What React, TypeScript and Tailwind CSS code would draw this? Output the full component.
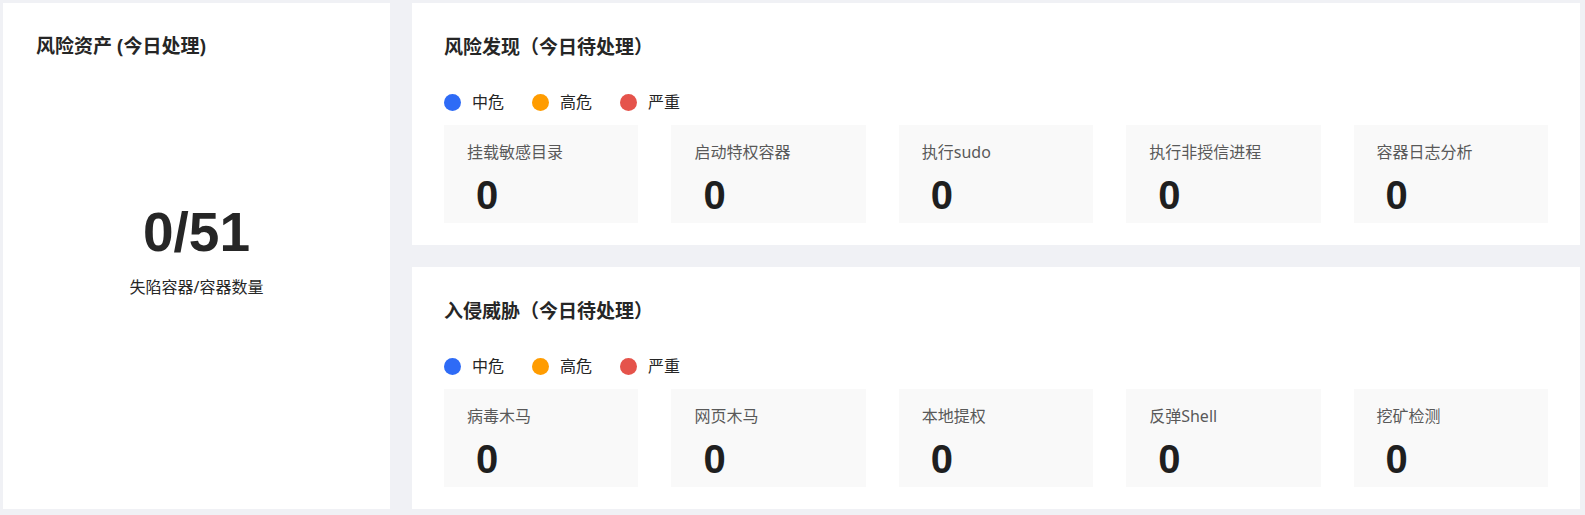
const levels = [
  { name: "中危", color: "bg-[#2e6bf6]" },
  { name: "高危", color: "bg-[#ff9c00]" },
  { name: "严重", color: "bg-[#e5534b]" },
];

const risks = ["挂载敏感目录", "启动特权容器", "执行sudo", "执行非授信进程", "容器日志分析"];
const threats = ["病毒木马", "网页木马", "本地提权", "反弹Shell", "挖矿检测"];

function Legend() {
  return (
    <div className="mt-[32px] flex items-center gap-[28px]">
      {levels.map((l) => (
        <div key={l.name} className="flex items-center gap-[11px]">
          <span className={`h-[17px] w-[17px] rounded-full ${l.color}`} />
          <span className="text-[16px] leading-[22px] text-[#262626]">{l.name}</span>
        </div>
      ))}
    </div>
  );
}

function Panel({ title, items }: { title: string; items: string[] }) {
  return (
    <div className="h-[242px] bg-white px-[32px] pt-[32px]">
      <h2 className="text-[19px] font-bold leading-[24px] text-[#262626]">{title}</h2>
      <Legend />
      <div className="mt-[12px] grid grid-cols-5 gap-[33px]">
        {items.map((name) => (
          <div key={name} className="h-[98px] bg-[#f9f9f9] px-[23px] pt-[16px]">
            <div className="text-[16px] leading-[22px] text-[#595959]">{name}</div>
            <div className="ml-[9px] mt-[12px] font-['Liberation_Sans',sans-serif] text-[40px] font-bold leading-[40px] text-[#1f1f1f]">
              0
            </div>
          </div>
        ))}
      </div>
    </div>
  );
}

export default function App() {
  return (
    <div className="flex h-[515px] w-full gap-[22px] bg-[#f0f1f5] pb-[6px] pl-[3px] pr-[5px] pt-[3px] font-['Noto_Sans','Noto_Sans_CJK_SC',sans-serif]">
      <div className="flex w-[387px] flex-col bg-white pt-[31px]">
        <h2 className="px-[33px] text-[19px] font-bold leading-[24px] text-[#262626]">风险资产 (今日处理)</h2>
        <div className="mt-[142px] text-center font-['Liberation_Sans',sans-serif] text-[55px] font-bold leading-[64px] text-[#262626]">
          0/51
        </div>
        <div className="mt-[12px] text-center text-[16px] leading-[22px] text-[#262626]">失陷容器/容器数量</div>
      </div>
      <div className="flex flex-1 flex-col gap-[22px]">
        <Panel title="风险发现（今日待处理）" items={risks} />
        <Panel title="入侵威胁（今日待处理）" items={threats} />
      </div>
    </div>
  );
}
